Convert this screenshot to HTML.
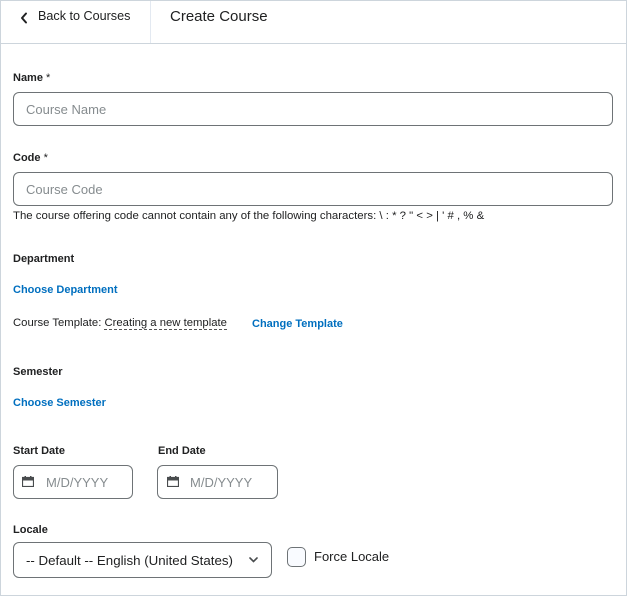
<!DOCTYPE html>
<html><head><style>
*{box-sizing:border-box;margin:0;padding:0}
body{width:627px;height:596px;background:#fff;font-family:"Liberation Sans",sans-serif;color:#202122;position:relative;overflow:hidden}
.frame{position:absolute;left:0;top:0;width:627px;height:596px;border:1px solid #cdd5dc}
.a{position:absolute;white-space:nowrap}
.lbl{font-size:11px;font-weight:bold;color:#202122}
.inp{position:absolute;border:1px solid #6e7376;border-radius:6px;background:#fff;font-size:13px;color:#868c8f;padding-left:12px;display:flex;align-items:center}
.link{font-size:11px;font-weight:bold;color:#006fbf}
</style></head><body>
<div class="frame"></div>
<div class="a" style="left:0;top:43px;width:627px;height:1px;background:#cdd5dc"></div>
<div class="a" style="left:150px;top:1px;width:1px;height:42px;background:#e3e9f1"></div>
<svg class="a" style="left:20px;top:12px" width="8" height="12" viewBox="0 0 8 12"><path d="M6 1.5L2 6l4 4.5" stroke="#202122" stroke-width="2" fill="none" stroke-linecap="round" stroke-linejoin="round"/></svg>
<div class="a" style="left:38px;top:9px;font-size:12.6px">Back to Courses</div>
<div class="a" style="left:170px;top:8px;font-size:15px">Create Course</div>

<div class="a lbl" style="left:13px;top:72px">Name <span style="font-weight:normal">*</span></div>
<div class="inp" style="left:13px;top:92px;width:600px;height:34px">Course Name</div>
<div class="a lbl" style="left:13px;top:152px">Code <span style="font-weight:normal">*</span></div>
<div class="inp" style="left:13px;top:172px;width:600px;height:34px">Course Code</div>
<div class="a" style="left:13px;top:210px;font-size:11.4px">The course offering code cannot contain any of the following characters: \ : * ? " &lt; &gt; | ' # , % &amp;</div>
<div class="a lbl" style="left:13px;top:253px">Department</div>
<div class="a link" style="left:13px;top:284px">Choose Department</div>
<div class="a" style="left:13px;top:317px;font-size:11.3px">Course Template: <span style="border-bottom:1px dashed #555">Creating a new template</span></div>
<div class="a link" style="left:252px;top:318px">Change Template</div>
<div class="a lbl" style="left:13px;top:366px">Semester</div>
<div class="a link" style="left:13px;top:397px">Choose Semester</div>
<div class="a lbl" style="left:13px;top:445px">Start Date</div>
<div class="a lbl" style="left:158px;top:445px">End Date</div>
<div class="inp" style="left:13px;top:465px;width:120px;height:34px;padding-left:32px">M/D/YYYY</div>
<div class="inp" style="left:157px;top:465px;width:121px;height:34px;padding-left:32px">M/D/YYYY</div>
<svg class="a" style="left:22px;top:476px" width="12" height="11" viewBox="0 0 12 11"><rect x="0.5" y="1.5" width="11" height="9" fill="none" stroke="#494c4e" stroke-width="1.2"/><rect x="0.5" y="1.5" width="11" height="3" fill="#494c4e"/><rect x="2.5" y="0" width="1.5" height="2" fill="#494c4e"/><rect x="8" y="0" width="1.5" height="2" fill="#494c4e"/></svg>
<svg class="a" style="left:167px;top:476px" width="12" height="11" viewBox="0 0 12 11"><rect x="0.5" y="1.5" width="11" height="9" fill="none" stroke="#494c4e" stroke-width="1.2"/><rect x="0.5" y="1.5" width="11" height="3" fill="#494c4e"/><rect x="2.5" y="0" width="1.5" height="2" fill="#494c4e"/><rect x="8" y="0" width="1.5" height="2" fill="#494c4e"/></svg>
<div class="a lbl" style="left:13px;top:524px">Locale</div>
<div class="inp" style="left:13px;top:542px;width:259px;height:36px;color:#202122;font-size:13.3px">-- Default -- English (United States)</div>
<svg class="a" style="left:249px;top:557px" width="9" height="6" viewBox="0 0 9 6"><path d="M1 1l3.5 3.5L8 1" stroke="#494c4e" stroke-width="1.6" fill="none" stroke-linecap="round"/></svg>
<div class="a" style="left:287px;top:547px;width:19px;height:20px;border:1px solid #6e7376;border-radius:5px;background:#f9fbff"></div>
<div class="a" style="left:314px;top:549px;font-size:13px">Force Locale</div>
</body></html>
